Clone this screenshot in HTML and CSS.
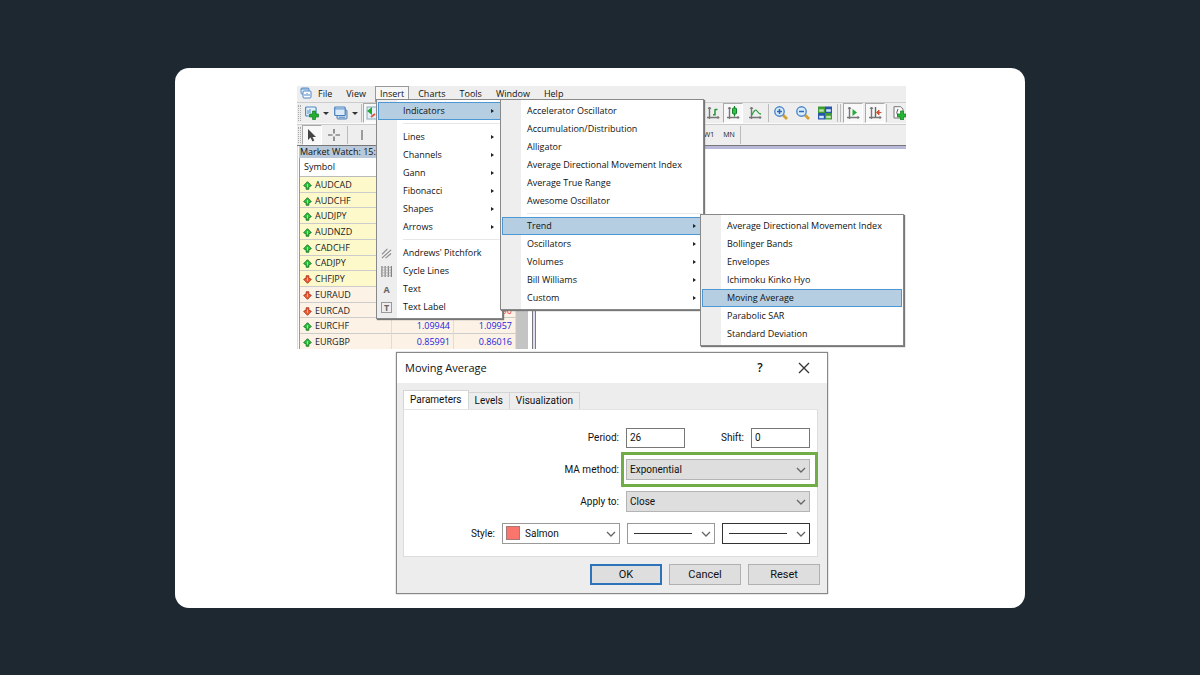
FILE: index.html
```html
<!DOCTYPE html>
<html lang="en">
<head>
<meta charset="utf-8">
<meta name="viewport" content="width=device-width, initial-scale=1">
<title>Moving Average</title>
<link rel="stylesheet" href="styles.css">
</head>
<body>
<svg class="defs" aria-hidden="true">
  <symbol id="up" viewBox="0 0 9 9"><path d="M4.500 .7 8.300 4.700 5.800 6V8.200H3.200V6L.7 4.700Z" fill="#2fc040" stroke="#1a7d28" stroke-width="1"/><path d="M4.500 3V6.500" fill="none" stroke="#9cf09a" stroke-width=".9"/></symbol>
  <symbol id="down" viewBox="0 0 9 9"><path d="M4.500 8.300 .7 4.300 3.200 3V.8H5.800V3L8.300 4.300Z" fill="#ee5a34" stroke="#ad3a22" stroke-width="1"/><path d="M4.500 2.500V6" fill="none" stroke="#ffb59a" stroke-width=".9"/></symbol>
  <symbol id="axes" viewBox="0 0 14 14"><path d="M3.500 1V13M1 11.500H13" stroke="#777" stroke-width="1.400" fill="none"/><path d="M2 3 3.500 1 5 3M11.500 10 13 11.500 11.500 13" stroke="#777" fill="none"/></symbol>
  <symbol id="chev" viewBox="0 0 10 6"><path d="M1 1 5 5 9 1" fill="none" stroke="#666" stroke-width="1.300"/></symbol>
</svg>
<main class="card">
  <section class="app">
    <nav class="menubar">
      <svg class="logo" viewBox="0 0 12 12"><rect x="1" y="1" width="8" height="6" rx="1" fill="#dcebfa" stroke="#5b8fc9"/><path d="M1 2H9" stroke="#5b8fc9"/><rect x="3" y="4" width="8" height="7" rx="1" fill="#fff" stroke="#4d83c2"/><path d="M5 9V7M7 9V6M9 9V7" stroke="#4d83c2"/></svg>
      <button class="top">File</button><button class="top">View</button><button class="top open">Insert</button><button class="top">Charts</button><button class="top">Tools</button><button class="top">Window</button><button class="top">Help</button>
    </nav>
    <div class="toolbar">
      <span class="grip"></span>
      <button class="tool wide" aria-label="New chart"><svg class="icon" viewBox="0 0 14 14"><rect x=".6" y="1" width="10.500" height="9" rx="1" fill="#e4f1fb" stroke="#4f8ac0" stroke-width="1.200"/><path d="M3 8V4M5 7V3" stroke="#4f8ac0"/><path d="M7.500 5h3v3h3v3h-3v2.500h-3v-2.500h-3v-3h3Z" fill="#24ae32" stroke="#138021" stroke-width=".7"/></svg><i class="caret"></i></button>
      <button class="tool wide" aria-label="Profiles"><svg class="icon" viewBox="0 0 14 14"><rect x="3" y="4" width="10" height="9" rx="1" fill="#c4d5e6" stroke="#5580b0"/><rect x=".7" y="1" width="10.500" height="8.500" rx="1" fill="#dceaf8" stroke="#477fbc" stroke-width="1.200"/><path d="M1 2.800H11M5 11.300h6" stroke="#6ea1d6" stroke-width="1.300"/></svg><i class="caret"></i></button>
      <span class="rule"></span>
      <button class="tool pressed" aria-label="Market watch"><svg class="icon" viewBox="0 0 14 14"><rect x="1" y="1" width="12" height="12" fill="#e4f1fb" stroke="#8ab"/><path d="M1 5 6 1V9Z" fill="#24a832"/><path d="M5 11 9 8" stroke="#d54" stroke-width="2"/></svg></button>
      <div class="tools-right">
        <button class="tool" aria-label="Bar chart"><svg class="icon" viewBox="0 0 14 14"><use href="#axes"/><path d="M9 3V9.500M9 8.800H7M9 3.500h2.500" stroke="#24983a" stroke-width="1.500"/></svg></button>
        <button class="tool pressed" aria-label="Candlesticks"><svg class="icon" viewBox="0 0 14 14"><use href="#axes"/><path d="M8.500 0V10.500" stroke="#15802a" stroke-width="1.200"/><rect x="6.500" y="2" width="4" height="6" rx="1" fill="#2fc443" stroke="#15802a"/></svg></button>
        <button class="tool line-tool" aria-label="Line chart"><svg class="icon" viewBox="0 0 14 14"><use href="#axes"/><path d="M4 9Q7 2 9 5T13 8" fill="none" stroke="#31a244" stroke-width="1.300"/></svg></button>
        <span class="rule"></span>
        <button class="tool zoom" aria-label="Zoom in"><svg class="icon" viewBox="0 0 14 14"><path d="M9 9 13 13" stroke="#d0a032" stroke-width="2.800"/><circle cx="5.500" cy="5.500" r="4.700" fill="#d7ecfb" stroke="#4d87c9" stroke-width="1.400"/><path d="M3 5.500H8M5.500 3V8" stroke="#2c69b4" stroke-width="1.500"/></svg></button>
        <button class="tool zoom" aria-label="Zoom out"><svg class="icon" viewBox="0 0 14 14"><path d="M9 9 13 13" stroke="#d0a032" stroke-width="2.800"/><circle cx="5.500" cy="5.500" r="4.700" fill="#d7ecfb" stroke="#4d87c9" stroke-width="1.400"/><path d="M3 5.500H8" stroke="#2c69b4" stroke-width="1.500"/></svg></button>
        <button class="tool zoom" aria-label="Tile windows"><svg class="icon" viewBox="0 0 14 14"><path d="M0 .5H7V7H0ZM7 7H14V13.500H7Z" fill="#3f9a35"/><path d="M7 .5H14V7H7ZM0 7H7V13.500H0Z" fill="#2856a8"/><path d="M1.200 3.200H5.800V5.800H1.200ZM8.200 9.700H12.800V12.300H8.200Z" fill="#b8e6a8"/><path d="M8.200 3.200H12.800V5.800H8.200ZM1.200 9.700H5.800V12.300H1.200Z" fill="#d3e6fb"/></svg></button>
        <span class="rule"></span><span class="rule"></span>
        <button class="tool pressed scroll-tool" aria-label="Auto scroll"><svg class="icon" viewBox="0 0 14 14"><use href="#axes"/><path d="M6.500 3 11 6.500 6.500 10Z" fill="#28ab3c"/></svg></button>
        <button class="tool pressed shift-tool" aria-label="Chart shift"><svg class="icon" viewBox="0 0 14 14"><use href="#axes"/><path d="M7.500 1V11" stroke="#666" stroke-width="1.400"/><path d="M8.500 6.500 11 4V9ZM11 6.500h2.500" fill="#d5502f" stroke="#d5502f"/></svg></button>
        <span class="rule"></span>
        <button class="tool last" aria-label="Indicators"><svg class="icon" viewBox="0 0 14 14"><path d="M2 .7H8.500L11 3V12H2Z" fill="#fafafa" stroke="#777"/><path d="M6 3Q3.500 6.500 6 10" fill="none" stroke="#555"/><path d="M8.500 5h3v3H14v3h-2.500v3h-3v-3h-3V8h3Z" fill="#24b534" stroke="#138021" stroke-width=".7"/></svg></button>
      </div>
    </div>
    <div class="toolbar second">
      <span class="grip"></span>
      <button class="tool pressed" aria-label="Cursor"><svg class="icon" viewBox="0 0 14 14"><path d="M3 1V12L5.500 9.500 7.500 13.500 9.300 12.600 7.500 9H11Z" fill="#444"/></svg></button>
      <button class="tool cross" aria-label="Crosshair"><svg class="icon" viewBox="0 0 14 14"><path d="M7 1V5.500M7 8.500V13M1 7H5.500M8.500 7H13" stroke="#555" stroke-width="1.200"/></svg></button>
      <span class="rule"></span>
      <button class="tool vertical" aria-label="Vertical line"><svg class="icon" viewBox="0 0 14 14"><path d="M7 2V12" stroke="#666" stroke-width="1.200"/></svg></button>
      <div class="periods"><button class="period">W1</button><button class="period">MN</button><span class="rule"></span></div>
    </div>
    <div class="workspace">
      <section class="watch">
        <h2 class="watch-title">Market Watch: 15:27</h2>
        <table class="quotes">
          <thead><tr><th>Symbol</th><th aria-label="Bid"></th><th aria-label="Ask"></th></tr></thead>
          <tbody>
            <tr><td><svg class="dir"><use href="#up"/></svg>AUDCAD</td><td></td><td></td></tr>
            <tr><td><svg class="dir"><use href="#up"/></svg>AUDCHF</td><td></td><td></td></tr>
            <tr><td><svg class="dir"><use href="#up"/></svg>AUDJPY</td><td></td><td></td></tr>
            <tr><td><svg class="dir"><use href="#up"/></svg>AUDNZD</td><td></td><td></td></tr>
            <tr><td><svg class="dir"><use href="#up"/></svg>CADCHF</td><td></td><td></td></tr>
            <tr><td><svg class="dir"><use href="#up"/></svg>CADJPY</td><td></td><td></td></tr>
            <tr><td><svg class="dir"><use href="#down"/></svg>CHFJPY</td><td></td><td></td></tr>
            <tr class="eur"><td><svg class="dir"><use href="#down"/></svg>EURAUD</td><td></td><td></td></tr>
            <tr class="eur"><td><svg class="dir"><use href="#down"/></svg>EURCAD</td><td></td><td class="fall">90</td></tr>
            <tr class="eur"><td><svg class="dir"><use href="#up"/></svg>EURCHF</td><td>1.09944</td><td>1.09957</td></tr>
            <tr class="eur"><td><svg class="dir"><use href="#up"/></svg>EURGBP</td><td>0.85991</td><td>0.86016</td></tr>
          </tbody>
        </table>
      </section>
      <div class="scroll"></div>
      <div class="chart-area"></div>
    </div>

    <ul class="menu insert-menu">
      <li><button class="item active more">Indicators</button></li>
      <li class="sep"></li>
      <li><button class="item more">Lines</button></li>
      <li><button class="item more">Channels</button></li>
      <li><button class="item more">Gann</button></li>
      <li><button class="item more">Fibonacci</button></li>
      <li><button class="item more">Shapes</button></li>
      <li><button class="item more">Arrows</button></li>
      <li class="sep"></li>
      <li><button class="item"><svg class="glyph" viewBox="0 0 12 12"><path d="M1 7 7 1M1 11 11 2M5 11 11 6" stroke="#888" stroke-width="1.200"/></svg>Andrews' Pitchfork</button></li>
      <li><button class="item"><svg class="glyph" viewBox="0 0 12 12"><path d="M1 0V12M4.500 0V12M8 0V12M11.300 0V12" stroke="#777" stroke-width="1.200"/><path d="M1 1.500H11M1 4.500H11M1 7.500H11M1 10.500H11" stroke="#aaa" stroke-width=".8"/></svg>Cycle Lines</button></li>
      <li><button class="item"><span class="glyph letter" aria-hidden="true">A</span>Text</button></li>
      <li><button class="item"><span class="glyph letter boxed" aria-hidden="true">T</span>Text Label</button></li>
    </ul>
    <ul class="menu indicator-menu">
      <li><button class="item">Accelerator Oscillator</button></li>
      <li><button class="item">Accumulation/Distribution</button></li>
      <li><button class="item">Alligator</button></li>
      <li><button class="item">Average Directional Movement Index</button></li>
      <li><button class="item">Average True Range</button></li>
      <li><button class="item">Awesome Oscillator</button></li>
      <li class="sep"></li>
      <li><button class="item active more">Trend</button></li>
      <li><button class="item more">Oscillators</button></li>
      <li><button class="item more">Volumes</button></li>
      <li><button class="item more">Bill Williams</button></li>
      <li><button class="item more">Custom</button></li>
    </ul>
    <ul class="menu trend-menu">
      <li><button class="item">Average Directional Movement Index</button></li>
      <li><button class="item">Bollinger Bands</button></li>
      <li><button class="item">Envelopes</button></li>
      <li><button class="item">Ichimoku Kinko Hyo</button></li>
      <li><button class="item active">Moving Average</button></li>
      <li><button class="item">Parabolic SAR</button></li>
      <li><button class="item">Standard Deviation</button></li>
    </ul>
  </section>

  <form class="dialog" role="dialog" aria-labelledby="dialog-title">
    <header class="titlebar">
      <h1 class="title" id="dialog-title">Moving Average</h1>
      <button type="button" class="help">?</button>
      <button type="button" class="close" aria-label="Close"><svg class="x" viewBox="0 0 12 12"><path d="M1 1 11 11M11 1 1 11" stroke="#333" stroke-width="1.300"/></svg></button>
    </header>
    <div class="dialog-body">
      <div class="tabs">
        <button type="button" class="tab current">Parameters</button><button type="button" class="tab">Levels</button><button type="button" class="tab">Visualization</button>
      </div>
      <div class="panel">
        <div class="row">
          <label for="period">Period:</label><input class="field" id="period" value="26">
          <label class="shift-label" for="shift">Shift:</label><input class="field" id="shift" value="0">
        </div>
        <div class="row">
          <label for="method">MA method:</label>
          <div class="pick long marked"><select class="select grey" id="method"><option>Exponential</option></select><svg class="chev"><use href="#chev"/></svg></div>
        </div>
        <div class="row">
          <label for="apply">Apply to:</label>
          <div class="pick long"><select class="select grey" id="apply"><option>Close</option></select><svg class="chev"><use href="#chev"/></svg></div>
        </div>
        <div class="row">
          <label for="color">Style:</label>
          <div class="pick color"><select class="select swatched" id="color"><option>Salmon</option></select><span class="swatch"></span><svg class="chev"><use href="#chev"/></svg></div>
          <div class="pick stroke"><select class="select" aria-label="Line style"><option></option></select><span class="stroke-line"></span><svg class="chev"><use href="#chev"/></svg></div>
          <div class="pick stroke"><select class="select dark" aria-label="Line width"><option></option></select><span class="stroke-line"></span><svg class="chev"><use href="#chev"/></svg></div>
        </div>
      </div>
      <div class="actions">
        <button type="button" class="action primary">OK</button><button type="button" class="action">Cancel</button><button type="button" class="action">Reset</button>
      </div>
    </div>
  </form>
</main>
</body>
</html>
```
FILE: styles.css
```css
* { box-sizing: border-box; }
body {
  margin: 0;
  min-height: 100vh;
  padding: 68px 175px 67px;
  display: flex;
  background: #1e2831;
  color: #111;
  font: 500 9px/12px "Open Sans", "Noto Sans", sans-serif;
}
button, input, select { font: inherit; color: inherit; margin: 0; padding: 0; border: 0; background: none; border-radius: 0; }
h1, h2, ul { margin: 0; padding: 0; font: inherit; list-style: none; }
.defs { position: absolute; width: 0; height: 0; }
.card { flex: 1; min-width: 0; padding: 18px 119px 14px 122px; background: #fff; border-radius: 14px; }

.app { position: relative; }
.menubar { display: flex; align-items: stretch; height: 16px; padding-left: 3px; background: #eee; }
.logo { width: 12px; height: 12px; margin: 1px 0; }
.top { padding: 0 7px; white-space: nowrap; }
.top:first-of-type { padding-left: 6px; }
.menubar .open { padding: 0 4px 1px; margin: 0 2px 0 2px; border: solid #999; border-width: 1px 1px 0; background: #f7f7f7; }

.toolbar { display: flex; align-items: center; height: 22px; background: #eee; border-top: 1px solid #ccc; border-bottom: 1px solid #fafafa; overflow: hidden; }
.second { border-bottom: 1px solid #777; }
.grip { width: 3px; height: 16px; margin: 0 1px; border: dotted #aaa; border-width: 0 1px; }
.tool { display: flex; flex: none; align-items: center; justify-content: center; width: 20px; height: 20px; }
.wide { width: 29px; gap: 4px; }
.icon { width: 14px; height: 14px; flex: none; }
.caret { border: solid transparent; border-width: 3px 3px 0; border-top-color: #333; }
.pressed { background: #f8f8f8; border: 1px solid #fff; border-top-color: #aaa; border-left-color: #aaa; }
.rule { width: 1px; height: 18px; margin: 0 1px; background: #bbb; }
.tools-right { display: flex; align-items: center; margin-left: auto; }
.line-tool { width: 24px; }
.zoom { width: 22px; }
.scroll-tool { margin-left: 1px; }
.shift-tool { margin-left: 2px; }
.last { width: 18px; justify-content: flex-end; }
.cross { width: 24px; }
.vertical { width: 25px; }
.periods { display: flex; align-items: center; margin-left: auto; padding-right: 164px; font-size: 7px; }
.period { width: 20px; }

.workspace { display: flex; height: 203px; }
.watch { width: 219px; padding-left: 1px; background: #fff; border-left: 1px solid #ddd; overflow: hidden; }
.watch-title { padding-left: 1px; height: 12px; background: #b9c9d9; line-height: 11px; white-space: nowrap; }
.quotes { width: 100%; height: 192px; border-spacing: 0; table-layout: fixed; border-left: 1px solid #999; line-height: 12px; }
.quotes th { height: 19px; padding: 0 4px; text-align: left; font-weight: 500; border-bottom: 1px solid #bbb; }
.quotes th:first-child { width: 92px; }
.quotes td { padding: 1px 3px 0; background: #fdf9cb; border-bottom: 1px solid #ccc; border-right: 1px solid #ddd; text-align: right; color: #22d; white-space: nowrap; }
.quotes td:first-child { text-align: left; color: #222; }
.quotes .eur td { background: #fcf2e5; }
.quotes .fall { color: #e33; }
.dir { width: 9px; height: 9px; margin-right: 3px; vertical-align: -2px; }
.scroll { width: 12px; background: #c4c4c4; }
.chart-area { flex: 1; margin-left: 4px; border: 0 solid #777; border-left: 1px solid #777; border-top: 3px solid #b8b8d8; box-shadow: inset 2px 0 #ddddf4, inset 3px 0 #77779a; }

.menu { position: absolute; padding: 2px 1px; border: 1px solid #888; background: linear-gradient(to right, #eee 20px, #fff 20px); box-shadow: 1px 1px 1px #777; }
.insert-menu { left: 79px; top: 13px; width: 127px; }
.indicator-menu { left: 203px; top: 13px; width: 204px; }
.trend-menu { left: 403px; top: 128px; width: 204px; }
.item { position: relative; display: block; width: 100%; height: 18px; padding-left: 25px; text-align: left; white-space: nowrap; }
.active { background: #b6cee1; box-shadow: inset 0 0 0 1px #4f97d3; }
.more::after { content: ""; position: absolute; right: 6px; top: 7px; border: solid transparent; border-width: 2px 0 2px 3px; border-left-color: #222; }
.insert-menu .more::after { right: 7px; }
.sep { height: 7px; margin-left: 25px; padding-top: 3px; }
.insert-menu .sep { height: 8px; }
.sep::before { content: ""; display: block; height: 1px; background: #e8e8e8; }
.glyph { position: absolute; left: 3px; top: 4px; width: 11px; height: 11px; }
.letter { color: #666; font-weight: 700; line-height: 11px; text-align: center; }
.boxed { border: 1px solid #999; line-height: 9px; }

.dialog { width: 432px; margin: 3px 0 0 99px; border: 1px solid #888; background: #ededed; box-shadow: 0 0 1px #777; font: 10px/14px Roboto, "Liberation Sans", sans-serif; }
.titlebar { display: flex; align-items: center; height: 30px; padding: 0 17px 0 8px; background: #fff; }
.title { flex: 1; font: 500 11px/14px "Open Sans", "Noto Sans", sans-serif; }
.help { width: 12px; margin-right: 32px; font: 600 12px/14px "Open Sans", sans-serif; }
.close { width: 12px; height: 12px; }
.x { display: block; width: 12px; height: 12px; }
.dialog-body { padding: 7px 7px 8px 6px; }
.tabs { display: flex; align-items: flex-end; }
.tab { height: 17px; padding: 0 6px; border: 1px solid #d4d4d4; border-width: 1px 1px 0 0; }
.current { height: 19px; border-left-width: 1px; background: #fff; }
.panel { display: grid; gap: 11px; margin-right: 2px; padding: 17px 7px 12px; border: 1px solid #dcdcdc; border-top-color: #e4e4e4; background: #fff; }
.row { display: flex; align-items: center; justify-content: flex-end; gap: 7px; height: 21px; }
.field { width: 59px; height: 20px; padding: 0 3px; border: 1px solid #777; background: #fff; }
.shift-label { width: 52px; text-align: right; }
.pick { position: relative; height: 21px; }
.long { width: 184px; }
.color { width: 118px; }
.stroke { width: 88px; }
.marked::after { content: ""; position: absolute; inset: -7px -8px -7px -5px; border: 3px solid #70ad47; pointer-events: none; }
.select { display: block; width: 100%; height: 100%; padding: 0 3px; appearance: none; border: 1px solid #999; background: #fff; }
.grey { background: #dedede; border-color: #b4b4b4; }
.dark { border-color: #333; }
.swatched { padding-left: 22px; }
.swatch { position: absolute; left: 4px; top: 3px; width: 14px; height: 14px; border: 1px solid #a77; background: #fa766c; pointer-events: none; }
.stroke-line { position: absolute; left: 7px; top: 10px; width: 58px; height: 1px; background: #333; pointer-events: none; }
.chev { position: absolute; right: 4px; top: 8px; width: 10px; height: 6px; pointer-events: none; }
.actions { display: flex; justify-content: flex-end; gap: 7px; margin-top: 7px; }
.action { width: 72px; height: 21px; border: 1px solid #b0b0b0; background: #dedede; font-size: 11px; }
.primary { border: 2px solid #2c73b9; }
```
